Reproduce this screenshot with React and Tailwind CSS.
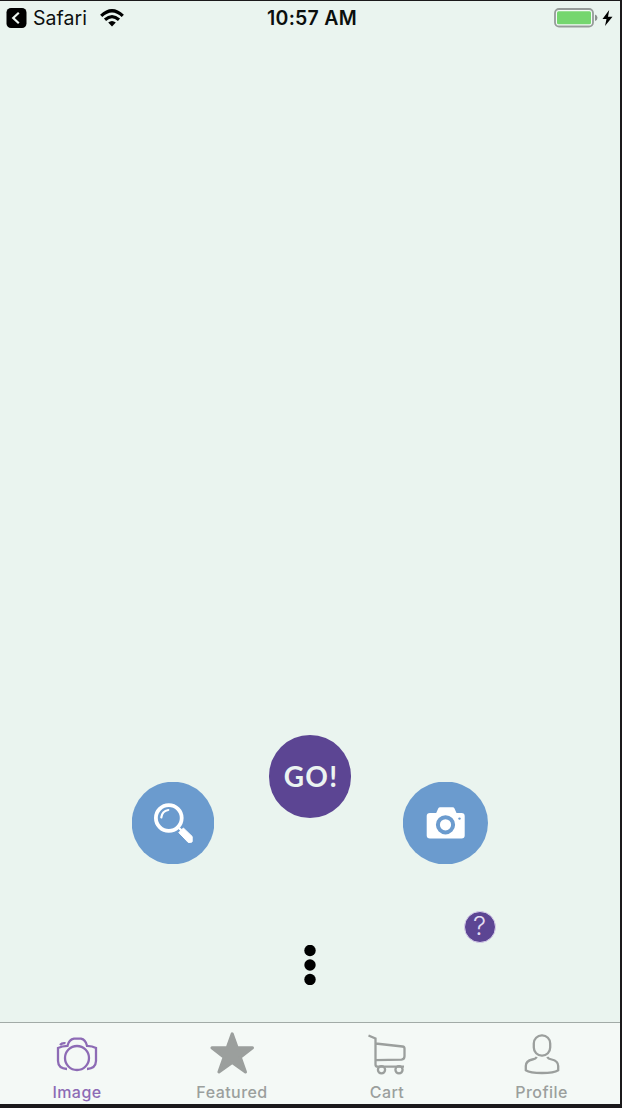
import React from "react";

function StatusBar() {
  return (
    <header className="grid h-[34px] grid-cols-[1fr_auto_1fr] items-center text-[19px] leading-[34px] text-[#0c0f0e]">
      <div className="flex items-center pl-[6px]">
        <svg width="21" height="20" viewBox="0 0 21 20" className="shrink-0">
          <rect x="0.5" y="0" width="20" height="20" rx="4.5" fill="#000" />
          <path d="M12.8 4.8 7.2 10l5.6 5.2" fill="none" stroke="#eef6f2" strokeWidth="2.2" />
        </svg>
        <span className="ml-[6px] w-[54px] whitespace-nowrap text-[19.5px] tracking-[0.05px]">Safari</span>
        <svg width="24" height="18" viewBox="0 0 24 18" className="ml-[13px] shrink-0">
          <g fill="none" stroke="#000" strokeWidth="3.2">
            <path d="M1.2 6.8Q12-3.4 22.8 6.8" />
            <path d="M5 10.8q7-6.2 14 0" />
          </g>
          <path d="M8.2 13.6q3.8-3.2 7.6 0L12 17.4Z" fill="#000" />
        </svg>
      </div>
      <div className="whitespace-nowrap pl-[4px] pt-px text-[19.5px] font-semibold leading-[33px] tracking-[0.25px]">10:57 AM</div>
      <div className="flex items-center justify-end pr-[7px]">
        <svg width="44" height="20" viewBox="0 0 44 20">
          <rect x="1" y="1" width="38" height="17.5" rx="4" fill="#f4faf7" stroke="#969b99" strokeWidth="1.8" />
          <rect x="3" y="3.2" width="34" height="13" rx="1.5" fill="#75d66f" />
          <path d="M41 6.5q2.5.8 2.5 3.3T41 13Z" fill="#8b908e" />
        </svg>
        <svg width="11" height="16" viewBox="0 0 11 16" className="ml-[4px]">
          <path d="M7.2 0 .5 8.9h4L3 16l7.5-9.3H6Z" fill="#000" />
        </svg>
      </div>
    </header>
  );
}

function Actions() {
  return (
    <div className="flex items-start pl-[132px]">
      <button aria-label="Search" className="mt-[47px]">
        <svg width="82" height="82" viewBox="0 0 82 82" className="block">
          <circle cx="41" cy="41" r="41.3" fill="#6b9bce" />
          <circle cx="36.8" cy="36" r="12.9" fill="none" stroke="#fff" strokeWidth="3.8" />
          <path d="M29.3 35.5q.8-6.5 7-7.5" fill="none" stroke="#fff" strokeWidth="2.2" strokeLinecap="round" />
          <path d="m47 46 2.4 2.4" stroke="#fff" strokeWidth="2.2" />
          <path d="M46.8 50.6 51.4 46l8.8 8.5v5.2q-1 1.2-4 .7Z" fill="#fff" stroke="#fff" strokeWidth="1" strokeLinejoin="round" />
        </svg>
      </button>
      <button className="ml-[55px] flex h-[83px] w-[82px] items-center justify-center rounded-full bg-[#5c4593] font-['Lato',sans-serif] text-[28px] font-bold leading-none tracking-[1.2px] text-[#ebf4f1]">
        <span className="pb-[1px] pl-[2px]">GO!</span>
      </button>
      <button aria-label="Camera" className="ml-[52px] mt-[47px]">
        <svg width="85" height="82" viewBox="0 0 85 82" className="block">
          <ellipse cx="42.4" cy="41" rx="42.6" ry="41.5" fill="#6b9bce" />
          <path d="M27 31h6.2l2-4.5q.5-1.2 2-1.2h12.3q1.5 0 2 1.2l2 4.5h5q3.2 0 3.2 3v19.5q0 3-3.2 3H27q-3.3 0-3.3-3V34q0-3 3.3-3Z" fill="#fff" />
          <circle cx="42.5" cy="42.8" r="7.6" fill="#fff" stroke="#6b9bce" strokeWidth="4" />
          <circle cx="56.5" cy="36.6" r="1.2" fill="#6b9bce" />
        </svg>
      </button>
    </div>
  );
}

function TabItem({ label, active, children }) {
  return (
    <button className={`flex flex-col items-center pt-[7px] ${active ? "text-[#8d6bb5]" : "text-[#9b9f9d]"}`}>
      <svg width="48" height="48" viewBox="0 0 48 48" fill="none" stroke="currentColor" strokeWidth="2.3">
        {children}
      </svg>
      <span className="mt-[4px] whitespace-nowrap text-[16px] font-medium leading-[20px] tracking-[0.45px]">{label}</span>
    </button>
  );
}

function TabBar() {
  return (
    <nav className="grid h-[82px] grid-cols-[154px_156px_154px_155px] border-t border-[#a2aba7] bg-[#f4f9f6]">
      <TabItem label="Image" active>
        <circle cx="24" cy="28" r="12" />
        <path d="M14 39q-8.8-.5-9-8V18q4-2 9.5-2.2Q16 9.5 21 8.7h7q4.5.8 6 7.1 5.5.2 9 2.2v13q-.3 7.5-9 8M7 15q2-2.4 5.5-1.8" />
      </TabItem>
      <TabItem label="Featured">
        <path d="m24.2 3.8 5 14h15.3L32.3 27.2 37.5 42l-13.3-9.5L10.9 42l5.2-14.8L3.9 17.8h15.3Z" fill="currentColor" strokeWidth="3" strokeLinejoin="round" />
      </TabItem>
      <TabItem label="Cart">
        <path d="m5.5 5.5 7 3v26q0 2.2 2.2 2.2H41M12.5 13.5l27 3q2 .2 2 2v7.8q0 3-3 3.3l-26 .6" />
        <circle cx="18.5" cy="39.8" r="3.6" />
        <circle cx="36" cy="39.8" r="3.6" />
      </TabItem>
      <TabItem label="Profile">
        <rect x="15.8" y="5.4" width="16.4" height="20.2" rx="8" />
        <path d="M18.8 27q-1 1.8-4.5 2.5-6.5 1.4-6.5 6.5v4.2Q12 43 24 43t16.2-2.8V36q0-5.1-6.5-6.5-3.5-.7-4.5-2.5" />
      </TabItem>
    </nav>
  );
}

export default function App() {
  return (
    <div className="h-[1108px] w-[622px] overflow-hidden bg-[#1b191b] pb-[4px] pr-[2px] pt-px font-['Inter',sans-serif]">
      <div className="flex h-full flex-col bg-[#eaf4ef]">
        <StatusBar />
        <main className="flex flex-1 flex-col justify-end">
          <Actions />
          <div className="flex h-[158px] items-start">
            <svg width="12" height="40" viewBox="0 0 12 40" className="ml-[304px] mt-[81px]">
              <circle cx="6" cy="5.5" r="5.7" />
              <circle cx="6" cy="20" r="5.7" />
              <circle cx="6" cy="34.5" r="5.7" />
            </svg>
            <button className="ml-[147.5px] mt-[46.5px] flex h-[32px] w-[32px] items-center justify-center rounded-full border border-[#d8cfeb] bg-[#5c4593] font-['Inter',sans-serif] text-[26px] font-light leading-none text-[#e4ddf2]">
              <span className="pb-px">?</span>
            </button>
          </div>
        </main>
        <TabBar />
      </div>
    </div>
  );
}
